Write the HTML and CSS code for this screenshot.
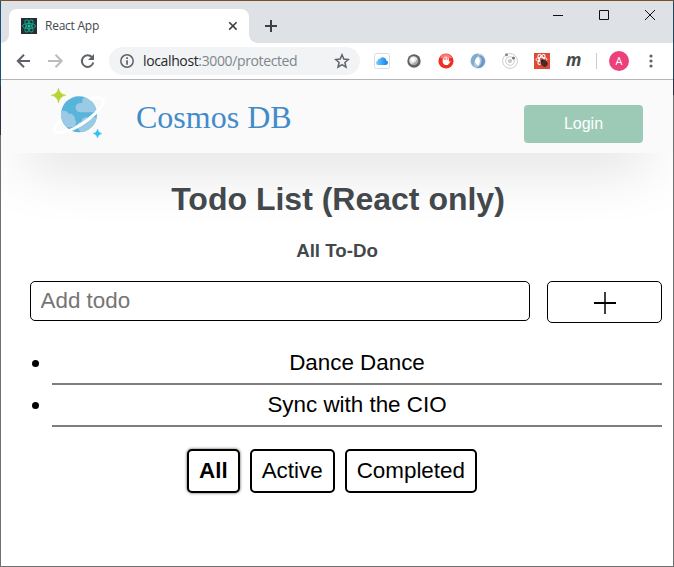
FILE: index.html
```html
<!DOCTYPE html>
<html lang="en">
<head>
<meta charset="utf-8">
<title>React App</title>
<link rel="stylesheet" href="styles.css">
</head>
<body>
<div class="window">
  <div class="tabstrip">
    <div class="tab">
      <svg class="favicon" width="16" height="16" viewBox="0 0 16 16"><rect width="16" height="16" fill="#282c34"/><g fill="none" stroke="#12a88a" stroke-width="1"><ellipse cx="8" cy="8" rx="6.6" ry="2.5"/><ellipse cx="8" cy="8" rx="6.6" ry="2.5" transform="rotate(60 8 8)"/><ellipse cx="8" cy="8" rx="6.6" ry="2.5" transform="rotate(120 8 8)"/></g><circle cx="8" cy="8" r="1.5" fill="#1fd0a5"/></svg>
      <span class="tab-title">React App</span>
      <svg class="tab-close" width="10" height="10" viewBox="0 0 10 10"><path d="M1.2 1.2l7.4 7.4M8.6 1.2L1.2 8.6" stroke="#3c4043" stroke-width="1.6"/></svg>
    </div>
    <svg class="new-tab" width="12" height="12" viewBox="0 0 12 12"><path d="M6 0v12M0 6h12" stroke="#3c4043" stroke-width="2"/></svg>
    <svg class="controls" width="104" height="12" viewBox="0 0 104 12"><g fill="none" stroke="#111"><path d="M0 6.5h10M46.5 1.5h9v9h-9z"/><path d="M92 1l10 10M102 1L92 11"/></g></svg>
  </div>
  <div class="toolbar">
    <svg class="nav" width="80" height="16" viewBox="0 0 80 16"><g fill="none" stroke-width="2"><path d="M14 8H2M8 1.8L1.8 8 8 14.2" stroke="#5f6368"/><path d="M32 8h12M39.5 1.8L45.7 8l-6.2 6.2" stroke="#babcbe"/><path d="M76 4.2A5.8 5.8 0 1 0 77.3 9.5" stroke="#5f6368"/></g><path d="M78 1v6h-6z" fill="#5f6368"/></svg>
    <div class="address">
      <svg width="14" height="14" viewBox="0 0 14 14"><circle cx="7" cy="7" r="6.2" fill="none" stroke="#5f6368" stroke-width="1.5"/><path d="M6.2 3.3h1.7v1.7H6.2zM6.2 6.2h1.7v4.6H6.2z" fill="#5f6368"/></svg>
      <span class="url">localhost<span class="path">:3000/protected</span></span>
      <svg class="star" width="16" height="16" viewBox="0 0 16 16"><path d="M8 1.8l1.8 4.3 4.6.4-3.5 3 1.1 4.6L8 11.7l-4 2.4 1.1-4.6-3.5-3 4.6-.4z" fill="none" stroke="#5f6368" stroke-width="1.5"/></svg>
    </div>
    <div class="extensions">
      <svg width="16" height="16" viewBox="0 0 16 16"><defs><linearGradient id="cloud" x2="1" y2="0"><stop stop-color="#6bd0fb"/><stop offset="1" stop-color="#167bf0"/></linearGradient></defs><rect x=".5" y=".5" width="15" height="15" rx="2" fill="#fff" stroke="#ddd"/><path d="M4 12a2.2 2.2 0 0 1-.3-4.3A2 2 0 0 1 6 5.7a3.5 3.5 0 0 1 6.3 1.8A2.3 2.3 0 0 1 12 12z" fill="url(#cloud)"/></svg>
      <svg width="16" height="16" viewBox="0 0 16 16"><circle cx="8" cy="8" r="6.7" fill="#626262"/><circle cx="7.5" cy="7.5" r="4.3" fill="#e4e4e4"/><path d="M11.5 5A4.5 4.5 0 0 1 5 11q5.5-1 6.5-6" fill="#aaa"/><circle cx="6.8" cy="6.5" r="2" fill="#fff"/></svg>
      <svg width="16" height="16" viewBox="0 0 16 16"><circle cx="8" cy="8" r="7.6" fill="#ee3124"/><path d="M2 5a6.5 6.5 0 0 1 12 0z" fill="#f77"/><path d="M5.3 7.5V5.5M7 7V4M8.7 7V4M10.3 8V5.2" stroke="#fff" stroke-width="1.1" stroke-linecap="round"/><path d="M4.8 7h6v2l1.5-1.2v1.2L9.8 12H6.8L4.8 10z" fill="#fff"/></svg>
      <svg width="16" height="16" viewBox="0 0 16 16"><circle cx="8" cy="8" r="7.6" fill="#a9c6e0"/><path d="M8 .5a7.5 7.5 0 0 0-4 13.5q-1-7 4-9z" fill="#82a9d0"/><path d="M8 2.5q5 2 3.5 6.5-1 4-5.5 6.2 8 0 9-7Q14 2 8 2.5" fill="#6c96c3"/><path d="M8 3.5q3.5 4 .5 9Q4.5 11 5 7.5 5.5 5 8 3.5" fill="#fff"/></svg>
      <svg width="16" height="16" viewBox="0 0 16 16"><g fill="none" stroke="#ccc"><circle cx="8" cy="8" r="7.4"/><circle cx="8" cy="8" r="4.3"/></g><circle cx="8" cy="8" r="2" fill="#c5c5c5"/><circle cx="4.5" cy="1.7" r="1.5" fill="#888"/><circle cx="11.5" cy="5" r="1.5" fill="#777"/></svg>
      <svg width="16" height="16" viewBox="0 0 16 16"><rect width="16" height="16" fill="#dd4b39"/><g fill="none" stroke="#fff"><ellipse cx="7.5" cy="6.5" rx="5.5" ry="2.2"/><ellipse cx="7.5" cy="6.5" rx="5.5" ry="2.2" transform="rotate(60 7.5 6.5)"/><ellipse cx="7.5" cy="6.5" rx="5.5" ry="2.2" transform="rotate(120 7.5 6.5)"/></g><ellipse cx="10" cy="10" rx="3" ry="4" fill="#222" transform="rotate(-35 10 10)"/><path d="M7 10h5M8 12h5M9 8h4" stroke="#a33" stroke-width=".7"/></svg>
      <span class="momentum">m</span>
    </div>
    <span class="divider"></span>
    <span class="avatar">A</span>
    <svg class="more" width="4" height="14" viewBox="0 0 4 14"><g fill="#5f6368"><circle cx="2" cy="2" r="1.6"/><circle cx="2" cy="7" r="1.6"/><circle cx="2" cy="12" r="1.6"/></g></svg>
  </div>
  <header class="site-header">
    <svg class="logo" width="58" height="54" viewBox="0 0 58 54">
      <defs><clipPath id="globe"><circle cx="28.5" cy="29" r="18"/></clipPath></defs>
      <g transform="translate(.5 -2.7)">
        <circle cx="28.5" cy="29" r="18" fill="#59b4d9"/>
        <g clip-path="url(#globe)" fill="#9bcbe4"><path d="M30 27a4.7 4.7 0 0 1-.5-9.4h2.5a5 5 0 0 1 3-6l14 2v13.4z"/><path d="M9 26.5c3-2 8-1.5 9 2a5.5 5.5 0 0 1 6.5 6c2 2 1 6-2 7.5H9z"/><path d="M48 32H36q-5 0-5 4.5-5 1-4.5 5 0 2 2 3L32 49l16-6z"/></g>
      </g>
      <path d="M39.5 11C51 8 57 10.5 51 19C44 28 33 36 23 41C13 45.5 2 46 4.500 40Q6 36 10.500 31.500" fill="none" stroke="#fff" stroke-width="3"/>
      <path d="M8.5 0Q9.5 6.3 16 7.3 9.5 8.3 8.5 15 7.5 8.3 1 7.3 7.5 6.3 8.5 0z" fill="#b8d432" stroke="#b8d432" stroke-width=".5"/>
      <path d="M47.5 41q.8 4 4.5 4.5-3.7.7-4.5 4.5-.8-3.8-4.5-4.5 3.7-.5 4.5-4.5z" fill="#32bef0" stroke="#32bef0" stroke-width=".4"/>
    </svg>
    <span class="brand">Cosmos DB</span>
    <button class="login">Login</button>
  </header>
  <main>
    <h1>Todo List (React only)</h1>
    <h3>All To-Do</h3>
    <form class="add-form">
      <input type="text" placeholder="Add todo">
      <button type="button" aria-label="Add"><svg width="22" height="22" viewBox="0 0 22 22"><path d="M0 11h22" stroke="#000" stroke-width="2"/><path d="M11 0v22" stroke="#000" stroke-width="1.5"/></svg></button>
    </form>
    <ul class="todos">
      <li>Dance Dance</li>
      <li>Sync with the CIO</li>
    </ul>
    <div class="filters">
      <button class="selected">All</button>
      <button>Active</button>
      <button>Completed</button>
    </div>
  </main>
</div>
</body>
</html>
```

FILE: styles.css
```css
* { box-sizing: border-box; }
body { margin: 0; font-family: "Liberation Sans", Arial, sans-serif; background: #fff; }
svg { display: block; flex: none; }
button, input { font-family: inherit; margin: 0; }
.window {
  height: 567px;
  padding: 1px;
  background:
    linear-gradient(#7a5225, #7a5225) 0 0 / 100% 1px no-repeat,
    linear-gradient(#707070, #707070) 0 100% / 100% 1px no-repeat,
    linear-gradient(#1b5175 0 86px, #332d43 86px 135px, #707070 135px) 0 0 / 1px 100% no-repeat,
    linear-gradient(#24435c 0 80px, #332d43 80px 95px, #707070 95px) 100% 0 / 1px 100% no-repeat,
    #fff;
  overflow: hidden;
  display: flex;
  flex-direction: column;
}
.tabstrip { flex: none; height: 42px; background: #dee1e6; display: flex; padding-left: 8px; }
.tab {
  width: 240px; height: 34px; margin-top: 8px; padding: 0 11px 0 12px;
  background: #fff; border-radius: 8px 8px 0 0; display: flex; align-items: center;
  position: relative;
}
.tab::before, .tab::after { content: ""; position: absolute; bottom: 0; width: 8px; height: 8px; }
.tab::before { right: 100%; background: radial-gradient(circle at 0 0, transparent 7.5px, #fff 8px); }
.tab::after { left: 100%; background: radial-gradient(circle at 100% 0, transparent 7.5px, #fff 8px); }
.tab-title { margin: -1px 0 0 8px; font: 12px "Open Sans", sans-serif; color: #45484c; letter-spacing: -.25px; }
.tab-close { margin-left: auto; }
.new-tab { margin: 19px 0 0 16px; }
.controls { margin: 8px 16px 0 auto; }
.toolbar { flex: none; height: 37px; border-bottom: 1px solid #b6b4b6; display: flex; align-items: center; padding-left: 15px; }
.address {
  width: 251px; height: 28px; margin-left: 13px; padding: 0 10px 0 11px;
  background: #f1f3f4; border-radius: 14px; display: flex; align-items: center;
}
.url { margin: -1px 0 0 9px; font: 14px "Open Sans", sans-serif; color: #26282b; letter-spacing: -.37px; }
.path { color: #80868b; }
.star { margin-left: auto; }
.extensions { display: flex; align-items: center; gap: 16px; margin-left: 14px; }
.momentum { width: 16px; font: italic bold 17px/16px "Open Sans", sans-serif; color: #464b47; margin-top: -3px; }
.divider { width: 1px; height: 16px; background: #ccc; margin-left: 14px; }
.avatar { width: 20px; height: 20px; margin-left: 12px; border-radius: 50%; background: #ec407a; color: #fff; font: 11px/20px "Open Sans", sans-serif; text-align: center; }
.more { margin-left: 20px; }
.site-header {
  flex: none; height: 73px; background: #fafafa; display: flex; align-items: flex-start;
  padding: 0 30px 0 49px; box-shadow: 0 30px 60px -25px rgba(0, 0, 0, .26);
  clip-path: inset(0 0 -90px 0);
}
.logo { margin-top: 8px; }
.brand { margin: 19px 0 0 28px; font: 32px/37px "Liberation Serif", serif; color: #428bca; }
.login { width: 119px; height: 38px; margin: 25px 0 0 auto; border: 0; border-radius: 4px; background: #9dcab6; color: #fff; font-size: 16px; }
main { padding: 0 11px 0 29px; position: relative; }
h1 { margin: 28px -11px 0 -29px; padding-left: 2px; text-align: center; font-size: 32px; line-height: 37px; color: #43484d; }
h3 { margin: 22px -11px 0 -29px; text-align: center; font-size: 18.72px; line-height: 21px; color: #43484d; }
.add-form { display: flex; align-items: flex-start; justify-content: space-between; margin-top: 20px; }
.add-form input { width: 500px; height: 40px; padding: 0 9.5px; border: 1px solid #000; border-radius: 5px; font-size: 22.4px; }
.add-form input::placeholder { color: #757575; }
.add-form button { width: 115px; height: 42px; padding: 2px 0 0; border: 1px solid #000; border-radius: 5px; background: #fff; display: flex; align-items: center; justify-content: center; }
.todos { margin: 20px 0 0; padding-left: 22px; font-size: 22.4px; text-align: center; }
.todos li { height: 42px; line-height: 40px; border-bottom: 2px solid #827d7d; }
.filters { display: flex; justify-content: center; gap: 10px; margin: 22px 28px 0 0; }
.filters button { height: 44px; padding: 0 10px; border: 2px solid #000; border-radius: 5px; background: #fff; font-size: 22.4px; color: #000; }
.filters .selected { font-weight: bold; box-shadow: 0 0 3px rgba(0, 0, 0, .7); }
```
